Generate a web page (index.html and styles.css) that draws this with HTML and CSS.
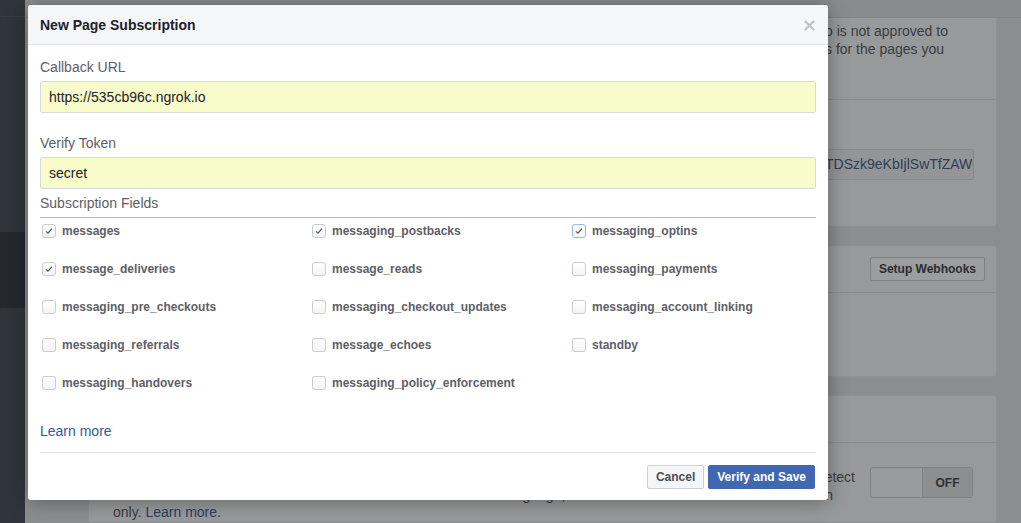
FILE: index.html
```html
<!DOCTYPE html>
<html>
<head>
<meta charset="utf-8">
<link rel="stylesheet" href="styles.css">
</head>
<body>
<div class="app">
  <aside class="sidebar">
    <div class="side-top"></div>
    <div class="side-gap"></div>
    <div class="side-active"></div>
  </aside>
  <main class="content">
    <div class="topbar"></div>
    <div class="cards">
      <section class="card card-a">
        <div class="card-sec sec-notice">
          <p class="notice">o is not approved to<br>s for the pages you</p>
        </div>
        <div class="card-sec sec-token">
          <div class="token">TDSzk9eKbIjlSwTfZAWOZCZBZAhMZD</div>
        </div>
      </section>
      <section class="card card-b">
        <div class="card-head head-b">
          <button class="bg-btn">Setup Webhooks</button>
        </div>
        <div class="card-body body-b"></div>
      </section>
      <section class="card card-c">
        <div class="card-head head-c"></div>
        <div class="card-body body-c">
          <p class="lang">
            <span class="ln ln1">Messages sent to your Page will be analyzed to detect</span>
            <span class="ln ln2">the language, which is then included in the webhook with</span>
            <span class="ln ln3">only. <a class="bg-link">Learn more.</a></span>
          </p>
          <div class="toggle"><span class="tg-left"></span><span class="tg-right">OFF</span></div>
        </div>
      </section>
    </div>
  </main>
</div>

<div class="modal">
  <div class="modal-head">
    <span class="modal-title">New Page Subscription</span>
    <svg class="close" width="11" height="11" viewBox="0 0 11 11"><path d="M1.5 1.5 L9.5 9.5 M9.5 1.5 L1.5 9.5" stroke="#bec2c9" stroke-width="2.2" stroke-linecap="round"/></svg>
  </div>
  <div class="modal-body">
    <div class="field-label">Callback URL</div>
    <div class="input">https://535cb96c.ngrok.io</div>
    <div class="field-label second">Verify Token</div>
    <div class="input">secret</div>
    <div class="field-label third">Subscription Fields</div>
    <div class="fields">
      <label class="opt"><span class="cb checked"><svg viewBox="0 0 14 14"><path d="M3.4 7.4 L5.8 9.6 L10.4 4.4" fill="none" stroke="#555a62" stroke-width="1.4"/></svg></span>messages</label>
      <label class="opt"><span class="cb checked"><svg viewBox="0 0 14 14"><path d="M3.4 7.4 L5.8 9.6 L10.4 4.4" fill="none" stroke="#555a62" stroke-width="1.4"/></svg></span>messaging_postbacks</label>
      <label class="opt"><span class="cb checked focus"><svg viewBox="0 0 14 14"><path d="M3.4 7.4 L5.8 9.6 L10.4 4.4" fill="none" stroke="#555a62" stroke-width="1.4"/></svg></span>messaging_optins</label>
      <label class="opt"><span class="cb checked"><svg viewBox="0 0 14 14"><path d="M3.4 7.4 L5.8 9.6 L10.4 4.4" fill="none" stroke="#555a62" stroke-width="1.4"/></svg></span>message_deliveries</label>
      <label class="opt"><span class="cb"></span>message_reads</label>
      <label class="opt"><span class="cb"></span>messaging_payments</label>
      <label class="opt"><span class="cb"></span>messaging_pre_checkouts</label>
      <label class="opt"><span class="cb"></span>messaging_checkout_updates</label>
      <label class="opt"><span class="cb"></span>messaging_account_linking</label>
      <label class="opt"><span class="cb"></span>messaging_referrals</label>
      <label class="opt"><span class="cb"></span>message_echoes</label>
      <label class="opt"><span class="cb"></span>standby</label>
      <label class="opt"><span class="cb"></span>messaging_handovers</label>
      <label class="opt"><span class="cb"></span>messaging_policy_enforcement</label>
    </div>
    <a class="learn">Learn more</a>
    <div class="modal-foot">
      <button class="btn btn-cancel">Cancel</button>
      <button class="btn btn-primary">Verify and Save</button>
    </div>
  </div>
</div>
</body>
</html>
```

FILE: styles.css
```css
* { box-sizing: border-box; }
html, body {
  margin: 0;
  padding: 0;
  height: 523px;
  overflow: hidden;
  font-family: "Liberation Sans", Arial, Helvetica, sans-serif;
}
body { background: #8b8c8e; }

.app {
  display: flex;
  height: 523px;
}

/* sidebar */
.sidebar {
  width: 25px;
  flex: none;
  background: #30353b;
  display: flex;
  flex-direction: column;
}
.side-top { height: 17px; border-bottom: 1px solid #3a3f45; }
.side-gap { height: 215px; }
.side-active { height: 76px; background: #24282d; }

/* main background */
.content {
  flex: 1;
  background: #8c8d8f;
  display: flex;
  flex-direction: column;
}
.topbar {
  height: 18px;
  border-bottom: 1px solid #838486;
  background: #8a8b8d;
}
.cards {
  padding-left: 63px;
  width: 972px;
  display: flex;
  flex-direction: column;
  gap: 18px;
}
.card {
  background: #98999a;
  border: 1px solid #8e8f91;
  border-top: none;
  border-radius: 0 0 3px 3px;
}
.card-b, .card-c { border-top: 1px solid #8e8f91; border-radius: 3px; }

.card-sec { border-bottom: 1px solid #8a8b8d; }
.card-sec:last-child { border-bottom: none; }
.sec-notice { height: 82px; padding-top: 4px; }
.notice {
  margin: 0 0 0 736px;
  font-size: 14px;
  line-height: 18px;
  color: #3b3c3e;
}
.sec-token { height: 126px; padding-top: 49px; }
.token {
  margin-left: 727px;
  width: 158px;
  height: 31px;
  padding: 0 0 0 8px;
  line-height: 29px;
  font-size: 14px;
  color: #2e3d5a;
  background: #949597;
  border: 1px solid #87888a;
  border-radius: 2px;
  white-space: nowrap;
  overflow: hidden;
}

.card-head {
  height: 47px;
  border-bottom: 1px solid #8a8b8d;
  display: flex;
  align-items: center;
  justify-content: flex-end;
  padding-right: 11px;
}
.bg-btn {
  height: 24px;
  padding: 0 8px;
  font-family: inherit;
  font-weight: bold;
  font-size: 12px;
  color: #2b2c2e;
  background: #9c9d9e;
  border: 1px solid #7f8082;
  border-radius: 2px;
}
.body-b { height: 83px; }
.body-c {
  display: flex;
  align-items: flex-start;
  padding: 26px 23px 0 24px;
}
.lang {
  flex: 1;
  margin: 0;
  font-size: 14px;
  line-height: 17.5px;
  color: #3b3c3e;
  white-space: nowrap;
}
.ln { display: block; }
.ln1 { width: 742px; text-align: right; }
.ln2 { width: 720px; text-align: right; }
.ln3 { text-align: left; }
.bg-link { color: #2c3d60; }
.toggle {
  margin-top: -2px;
  width: 103px;
  height: 31px;
  display: flex;
  border: 1px solid #808183;
  border-radius: 3px;
  overflow: hidden;
}
.tg-left { width: 52px; background: #9a9b9c; border-right: 1px solid #808183; }
.tg-right {
  flex: 1;
  background: #8d8e90;
  font-size: 12px;
  font-weight: bold;
  color: #2f3032;
  display: flex;
  align-items: center;
  justify-content: center;
}

/* modal */
.modal {
  position: absolute;
  left: 28px;
  top: 5px;
  width: 800px;
  background: #fff;
  border-radius: 3px;
  box-shadow: 0 2px 20px rgba(0, 0, 0, 0.35);
  overflow: hidden;
}
.modal-head {
  height: 40px;
  background: #f5f6f7;
  border-bottom: 1px solid #e5e5e5;
  display: flex;
  align-items: center;
  justify-content: space-between;
  padding: 0 12px;
}
.modal-title {
  font-weight: bold;
  font-size: 14px;
  color: #1d2129;
}
.close { margin-right: 1px; margin-top: 1px; }

.modal-body { padding: 13px 12px 11px; }
.field-label {
  font-size: 14px;
  line-height: 18px;
  color: #5d6066;
  margin-bottom: 5px;
}
.field-label.second { margin-top: 21px; }
.field-label.third { margin-top: 5px; }
.input {
  height: 32px;
  background: #f8fccb;
  border: 1px solid #d7dadf;
  border-radius: 2px;
  padding: 0 8px;
  font-size: 14px;
  line-height: 30px;
  color: #1d2129;
}
.fields {
  border-top: 1px solid #b5b7ba;
  padding-top: 6px;
  display: grid;
  grid-template-columns: 270px 260px 1fr;
  row-gap: 24px;
}
.opt {
  display: flex;
  align-items: center;
  gap: 6px;
  height: 14px;
  padding-left: 2px;
  font-size: 12px;
  font-weight: bold;
  color: #5d6066;
}
.cb {
  width: 14px;
  height: 14px;
  flex: none;
  border: 1px solid #c9ccd1;
  border-radius: 3px;
  background: linear-gradient(#ffffff, #f3f4f6);
  display: flex;
  align-items: center;
  justify-content: center;
}
.cb svg { width: 12px; height: 12px; }
.cb.focus { border-color: #97b4ee; }

.learn {
  display: block;
  margin-top: 32px;
  font-size: 14px;
  line-height: 18px;
  color: #365899;
}
.modal-foot {
  margin-top: 12px;
  border-top: 1px solid #dddfe2;
  padding-top: 12px;
  display: flex;
  justify-content: flex-end;
  gap: 4px;
  padding-right: 1px;
}
.btn {
  height: 24px;
  padding: 0 8px;
  font-family: inherit;
  font-size: 12px;
  font-weight: bold;
  border-radius: 2px;
  border: 1px solid;
}
.btn-cancel {
  background: #f5f6f7;
  border-color: #ccd0d5;
  color: #4b4f56;
}
.btn-primary {
  background: #4267b2;
  border-color: #4267b2;
  color: #fff;
}
```
